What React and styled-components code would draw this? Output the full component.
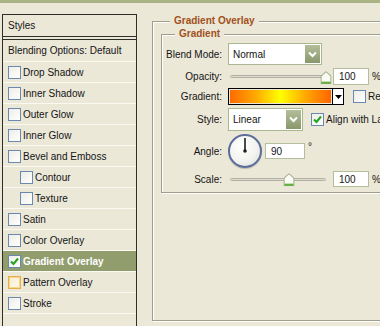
import styled, { createGlobalStyle } from "styled-components";

const GlobalStyle = createGlobalStyle`
  html, body {
    margin: 0;
    padding: 0;
    background: #ebe8d8;
  }
  body {
    font-family: "Liberation Sans", Arial, sans-serif;
    font-size: 10px;
    color: #141414;
  }
`;

const Window = styled.div`
  width: 380px;
  height: 326px;
  overflow: hidden;
  box-sizing: border-box;
  border-top: 3px solid #a9b384;
  display: flex;
  align-items: stretch;
`;

/* ---------- left list ---------- */

const StylesPanel = styled.div`
  width: 135px;
  flex-shrink: 0;
  margin: 11px 0 0 2px;
  box-sizing: border-box;
  border: 1px solid #2e2e2a;
  border-bottom: none;
  display: flex;
  flex-direction: column;
`;

const PanelHeader = styled.div`
  height: 21px;
  display: flex;
  align-items: center;
  padding-left: 5px;
  border-bottom: 1px solid #2e2e2a;
  margin-bottom: 2px;
`;

const List = styled.div`
  border-top: 1px solid #2e2e2a;
  display: flex;
  flex-direction: column;
`;

const Item = styled.div`
  height: 20px;
  display: flex;
  align-items: center;
  gap: 2px;
  padding-left: ${({ $indent }) => ($indent ? 17 : 5)}px;
  border-bottom: 1px solid #faf9f2;
  background: ${({ $active }) => ($active ? "#919d6c" : "transparent")};
  color: ${({ $active }) => ($active ? "#fff" : "inherit")};
  font-weight: ${({ $active }) => ($active ? "bold" : "normal")};
`;

const BlendItem = styled(Item)`
  height: 21px;
  padding-left: 5px;
`;

const Box = styled.span`
  width: 13px;
  height: 13px;
  flex-shrink: 0;
  box-sizing: border-box;
  border: 1px solid ${({ $hover }) => ($hover ? "#e4ae4a" : "#6a89b0")};
  background: ${({ $hover }) =>
    $hover
      ? "linear-gradient(135deg, #f6edd2, #fdf9ee)"
      : "linear-gradient(135deg, #eeede6, #ffffff)"};
  box-shadow: ${({ $hover }) => ($hover ? "inset 0 0 0 1px #f7d889" : "none")};
  display: flex;
  align-items: center;
  justify-content: center;
`;

function Checkbox({ checked, hover }) {
  return (
    <Box $hover={hover}>
      {checked && (
        <svg width="9" height="9" viewBox="0 0 9 9">
          <path d="M1 4.5 L3.5 7 L8 1.5" fill="none" stroke="#21a321" strokeWidth="2" />
        </svg>
      )}
    </Box>
  );
}

/* ---------- right panel ---------- */

const Group = styled.fieldset`
  margin: ${({ $outer }) => ($outer ? "12px 0 0 15px" : "0")};
  padding: ${({ $outer }) => ($outer ? "1px 0 0 8px" : "3px 0 5px 4px")};
  width: ${({ $outer }) => ($outer ? 260 : 240)}px;
  height: ${({ $outer }) => ($outer ? "306px" : "auto")};
  flex-shrink: 0;
  box-sizing: border-box;
  border: 1px solid #a09d8b;
  box-shadow: inset 1px 1px 0 #fff, 1px 1px 0 #fff;
`;

const Legend = styled.legend`
  margin-left: 9px;
  padding: 0 4px;
  line-height: 12px;
  font-weight: bold;
  color: #a1501a;
  background: #ebe8d8;
`;

const Row = styled.div`
  height: ${({ $h }) => $h}px;
  margin-top: 3px;
  display: flex;
  align-items: center;
  white-space: nowrap;
  &:first-of-type {
    margin-top: 0;
  }
`;

const Label = styled.span`
  width: 56px;
  margin-right: 6px;
  text-align: right;
  flex-shrink: 0;
`;

const Select = styled.div`
  width: ${({ $w }) => $w}px;
  height: 100%;
  box-sizing: border-box;
  border: 1px solid #aab791;
  background: #fff;
  display: flex;
  align-items: center;
  padding-left: 4px;
  flex-shrink: 0;
`;

const SelectButton = styled.span`
  margin: 1px 1px 1px auto;
  width: 15px;
  align-self: stretch;
  background: linear-gradient(#b4bf9b, #8a976b);
  display: flex;
  align-items: center;
  justify-content: center;
`;

function Dropdown({ w, value }) {
  return (
    <Select $w={w}>
      {value}
      <SelectButton>
        <svg width="9" height="7" viewBox="0 0 9 7">
          <path d="M1 1.5 L4.5 5 L8 1.5" fill="none" stroke="#fff" strokeWidth="2" />
        </svg>
      </SelectButton>
    </Select>
  );
}

const SliderWrap = styled.div`
  position: relative;
  width: 96px;
  height: 100%;
  margin-left: 2px;
  flex-shrink: 0;
  display: flex;
  align-items: center;
`;

const Track = styled.div`
  width: 100%;
  height: 3px;
  box-sizing: border-box;
  border: 1px solid #b3b1a3;
  border-radius: 2px;
  background: #dedcd1;
`;

const Thumb = styled.svg`
  position: absolute;
  top: 50%;
  transform: translate(-50%, -45%);
`;

function Slider({ pos }) {
  return (
    <SliderWrap>
      <Track />
      <Thumb width="11" height="13" viewBox="0 0 11 13" style={{ left: `${pos}%` }}>
        <path d="M0.5 5 L5.5 0.5 L10.5 5 L10.5 12.5 L0.5 12.5 Z" fill="#fbfbf6" stroke="#8c9a74" />
        <rect x="1" y="10.5" width="9" height="2" fill="#5fb33a" />
      </Thumb>
    </SliderWrap>
  );
}

const Field = styled.div`
  width: ${({ $w }) => $w}px;
  height: ${({ $h }) => ($h ? `${$h}px` : "100%")};
  margin-left: ${({ $ml }) => $ml}px;
  box-sizing: border-box;
  border: 1px solid #b3bf9c;
  background: #fff;
  padding-left: 5px;
  display: flex;
  align-items: center;
  flex-shrink: 0;
`;

const Unit = styled.span`
  margin-left: 3px;
  margin-bottom: ${({ $raised }) => ($raised ? 9 : 0)}px;
`;

const GradientBox = styled.div`
  width: 116px;
  height: 100%;
  box-sizing: border-box;
  border: 1px solid #000;
  display: flex;
  flex-shrink: 0;
`;

const Swatch = styled.div`
  flex: 1;
  margin: 1px;
  background: linear-gradient(90deg, #ff6a00 0%, #ffa800 25%, #ffff00 50%, #ffa800 75%, #ff6400 100%);
`;

const SwatchButton = styled.div`
  width: 10px;
  border-left: 1px solid #000;
  background: #fff;
  display: flex;
  align-items: center;
  justify-content: center;
`;

const CheckLabel = styled.label`
  display: flex;
  align-items: center;
  gap: 2px;
  margin-left: ${({ $ml }) => $ml}px;
`;

const Dial = styled.div`
  width: 34px;
  height: 34px;
  box-sizing: border-box;
  border: 2px solid #5d6e9b;
  border-radius: 50%;
  background: radial-gradient(circle at 40% 35%, #ffffff 0%, #f3f3f0 55%, #d9dad6 100%);
  box-shadow: 0 1px 1px rgba(0, 0, 0, 0.2);
  flex-shrink: 0;
  display: flex;
  align-items: center;
  justify-content: center;
`;

const listItems = [
  { name: "Drop Shadow" },
  { name: "Inner Shadow" },
  { name: "Outer Glow" },
  { name: "Inner Glow" },
  { name: "Bevel and Emboss" },
  { name: "Contour", indent: true },
  { name: "Texture", indent: true },
  { name: "Satin" },
  { name: "Color Overlay" },
  { name: "Gradient Overlay", active: true, checked: true },
  { name: "Pattern Overlay", hover: true },
  { name: "Stroke" },
];

export default function App() {
  return (
    <>
      <GlobalStyle />
      <Window>
        <StylesPanel>
          <PanelHeader>Styles</PanelHeader>
          <List>
            <BlendItem>Blending Options: Default</BlendItem>
            {listItems.map((it) => (
              <Item key={it.name} $indent={it.indent} $active={it.active}>
                <Checkbox checked={it.checked} hover={it.hover} />
                {it.name}
              </Item>
            ))}
          </List>
        </StylesPanel>

        <Group $outer>
          <Legend>Gradient Overlay</Legend>
          <Group>
            <Legend>Gradient</Legend>
            <Row $h={22}>
              <Label>Blend Mode:</Label>
              <Dropdown w={94} value="Normal" />
            </Row>
            <Row $h={17}>
              <Label>Opacity:</Label>
              <Slider pos={100} />
              <Field $w={36} $ml={7}>100</Field>
              <Unit>%</Unit>
            </Row>
            <Row $h={17}>
              <Label>Gradient:</Label>
              <GradientBox>
                <Swatch />
                <SwatchButton>
                  <svg width="7" height="4" viewBox="0 0 7 4">
                    <path d="M0 0 L7 0 L3.5 4 Z" fill="#000" />
                  </svg>
                </SwatchButton>
              </GradientBox>
              <CheckLabel $ml={9}>
                <Checkbox />
                Reverse
              </CheckLabel>
            </Row>
            <Row $h={23}>
              <Label>Style:</Label>
              <Dropdown w={75} value="Linear" />
              <CheckLabel $ml={8}>
                <Checkbox checked />
                Align with Layer
              </CheckLabel>
            </Row>
            <Row $h={34}>
              <Label>Angle:</Label>
              <Dial>
                <svg width="30" height="30" viewBox="0 0 30 30">
                  <line x1="15" y1="15" x2="15" y2="2" stroke="#1e1e1e" strokeWidth="1.6" />
                  <circle cx="15" cy="15" r="1.8" fill="#1e1e1e" />
                </svg>
              </Dial>
              <Field $w={40} $h={16} $ml={3}>90</Field>
              <Unit $raised>°</Unit>
            </Row>
            <Row $h={16}>
              <Label>Scale:</Label>
              <Slider pos={61.5} />
              <Field $w={36} $ml={7}>100</Field>
              <Unit>%</Unit>
            </Row>
          </Group>
        </Group>
      </Window>
    </>
  );
}
